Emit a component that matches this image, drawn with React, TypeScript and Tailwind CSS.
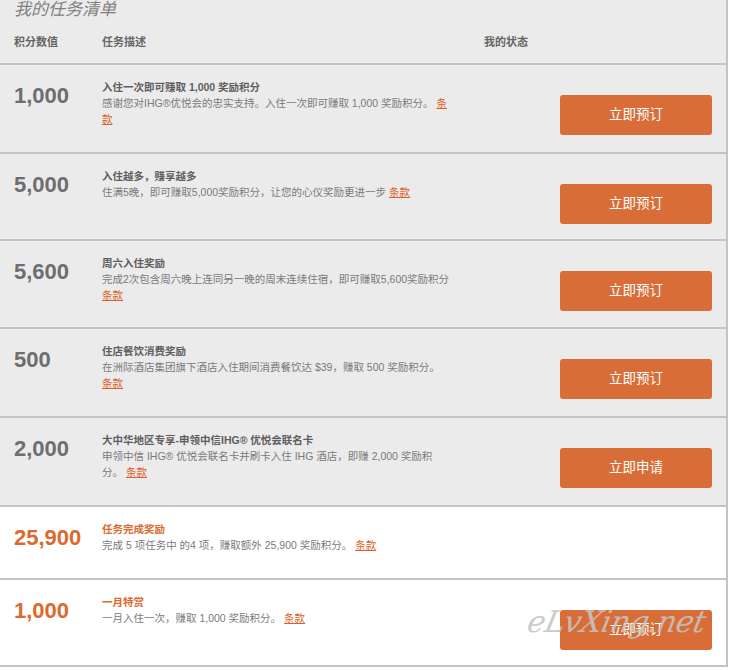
import React from 'react'

type Task = {
  points: string
  title: string
  desc: string
  link: React.ReactNode
  action?: string
  highlight?: boolean
  h: string
}

const tasks: Task[] = [
  {
    points: '1,000',
    title: '入住一次即可赚取 1,000 奖励积分',
    desc: '感谢您对IHG®优悦会的忠实支持。入住一次即可赚取 1,000 奖励积分。 ',
    link: <>条<br />款</>,
    action: '立即预订',
    h: 'h-[89px]',
  },
  {
    points: '5,000',
    title: '入住越多，赚享越多',
    desc: '住满5晚，即可赚取5,000奖励积分，让您的心仪奖励更进一步 ',
    link: '条款',
    action: '立即预订',
    h: 'h-[87px]',
  },
  {
    points: '5,600',
    title: '周六入住奖励',
    desc: '完成2次包含周六晚上连同另一晚的周末连续住宿，即可赚取5,600奖励积分 ',
    link: '条款',
    action: '立即预订',
    h: 'h-[88px]',
  },
  {
    points: '500',
    title: '住店餐饮消费奖励',
    desc: '在洲际酒店集团旗下酒店入住期间消费餐饮达 $39，赚取 500 奖励积分。 ',
    link: '条款',
    action: '立即预订',
    h: 'h-[89px]',
  },
  {
    points: '2,000',
    title: '大中华地区专享-申领中信IHG® 优悦会联名卡',
    desc: '申领中信 IHG® 优悦会联名卡并刷卡入住 IHG 酒店，即赚 2,000 奖励积分。 ',
    link: '条款',
    action: '立即申请',
    h: 'h-[89px]',
  },
  {
    points: '25,900',
    title: '任务完成奖励',
    desc: '完成 5 项任务中 的4 项，赚取额外 25,900 奖励积分。 ',
    link: '条款',
    highlight: true,
    h: 'h-[73px]',
  },
  {
    points: '1,000',
    title: '一月特赏',
    desc: '一月入住一次，赚取 1,000 奖励积分。 ',
    link: '条款',
    action: '立即预订',
    highlight: true,
    h: 'h-[87px]',
  },
]

const TaskRow = ({ task, last }: { task: Task; last: boolean }) => {
  return (
    <div
      className={`relative flex items-start border-b-2 border-[#c4c4c4] ${task.h} ${
        task.highlight ? 'bg-white' : 'bg-[#ebebeb]'
      }`}
    >
      <div
        className={`w-[102px] shrink-0 pl-[14px] pt-[18px] text-[22px] font-bold leading-[26px] ${
          task.highlight ? 'text-[#dc6a30]' : 'text-[#6e6e6e]'
        }`}
      >
        {task.points}
      </div>
      <div className="w-[350px] shrink-0 pt-[14px] text-[10.5px] leading-[16px]">
        <div className={`font-bold ${task.highlight ? 'text-[#dc6a30]' : 'text-[#5e5e5e]'}`}>
          {task.title}
        </div>
        <div className="text-[#7a7a7a]">
          {task.desc}
          <a href="#" className="text-[#dc5f28] underline">
            {task.link}
          </a>
        </div>
      </div>
      <div className="flex flex-1 justify-end pr-[14px] pt-[30px]">
        {task.action && (
          <button className="h-[40px] w-[152px] rounded-[3px] bg-[#d96d37] text-[13.5px] text-white">
            {task.action}
          </button>
        )}
      </div>
      {last && (
        <span className="pointer-events-none absolute left-[528px] top-[20px] -skew-x-12 font-['DejaVu_Serif',serif] text-[30px] italic leading-[44px] tracking-[-0.5px] text-[#c4c4c4]/90">
          eLvXing.net
        </span>
      )}
    </div>
  )
}

const App = () => {
  return (
    <div className="min-h-screen bg-white font-['Liberation_Sans','Noto_Sans_CJK_SC',sans-serif]">
      <div className="w-[728px] border-r-2 border-[#c4c4c4]">
        <header className="h-[65px] border-b-2 border-[#c4c4c4] bg-[#ebebeb]">
          <h2 className="pl-[14px] text-[17px] italic leading-[20px] text-[#808080]">我的任务清单</h2>
          <div className="mt-[14px] flex text-[11px] font-bold leading-[16px] text-[#666]">
            <div className="w-[102px] pl-[14px]">积分数值</div>
            <div className="w-[382px]">任务描述</div>
            <div>我的状态</div>
          </div>
        </header>
        {tasks.map((task, i) => (
          <TaskRow key={i} task={task} last={i === tasks.length - 1} />
        ))}
      </div>
    </div>
  )
}

export default App
